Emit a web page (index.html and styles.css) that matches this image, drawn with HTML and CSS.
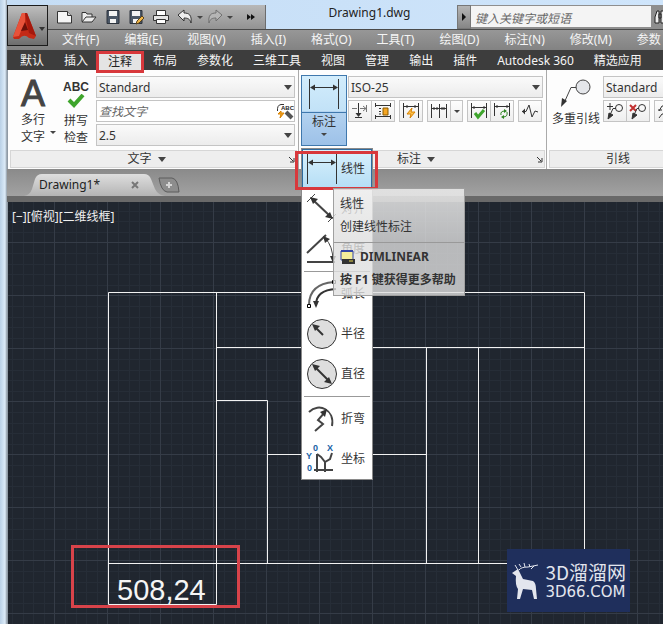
FILE: index.html
```html
<!DOCTYPE html>
<html lang="zh-CN">
<head>
    <meta charset="UTF-8">
    <meta name="viewport" content="width=device-width, initial-scale=1.0">
    <title>Drawing1.dwg</title>
    <link rel="stylesheet" href="styles.css">
</head>
<body>

    <header class="top">
        <button class="app-button" aria-label="应用程序菜单">
            <svg width="38" height="34" viewBox="0 0 38 34">
                <path d="M4 28 L13 4 L18 4 L27 27 L25 30 L20 29 Q15 24 10 30 L5 30 Z" fill="#c42a16"/>
                <path d="M4 28 L13 4 L16 4 L16 14 L12 22 L10 27 Z" fill="#e8523a"/>
                <path d="M16 4 L18 4 L27 27 L20 24 L18 15 Z" fill="#a5180c"/>
                <path d="M16 13 L19 21 L12 22 Z" fill="#6d0f08"/>
                <path d="M30 18 h6 l-3 4 z" fill="#333"/>
            </svg>
        </button>

        <div class="title-row">
            <div class="quick-access">
                <button class="quick" aria-label="新建">
                    <svg width="18" height="18" viewBox="0 0 18 18" stroke="#333"><path d="M1.500 3.500 h10 l4 4 v7.500 h-14 z" fill="#f5f5f5"/><path d="M11.500 3.500 v4 h4" fill="#ccc"/></svg>
                </button>
                <button class="quick" aria-label="打开">
                    <svg width="18" height="18" viewBox="0 0 18 18" stroke="#333" fill="#ececec"><path d="M2 13.500 V4.500 h4 l1 1.500 h5 v3"/><path d="M2 14 l4 -5 h10 l-4 5 z"/></svg>
                </button>
                <button class="quick" aria-label="保存">
                    <svg width="18" height="18" viewBox="0 0 18 18"><path d="M3 2.500 h12 v13 h-12 z" fill="#4b5766" stroke="#2c333c"/><path d="M5 3 h8 v5 h-8 z M6 11 h6 v4 h-6 z" fill="#f3f3f3"/></svg>
                </button>
                <button class="quick" aria-label="另存为">
                    <svg width="18" height="18" viewBox="0 0 18 18"><path d="M2 2.500 h12 v13 h-12 z" fill="#4b5766" stroke="#2c333c"/><path d="M4 3 h8 v5 h-8 z M5 11 h6 v4 h-6 z" fill="#f3f3f3"/><path d="M8 16 l1 -3 l5 -5 l2 2 l-5 5 z" fill="#f2b84a" stroke="#5b431a"/></svg>
                </button>
                <button class="quick" aria-label="打印">
                    <svg width="18" height="18" viewBox="0 0 18 18" stroke="#333"><path d="M4.500 7 V2.500 h9 V7" fill="#fff"/><path d="M1.500 7.500 h15 v5 h-15 z" fill="#e6e6e6"/><path d="M4.500 11.500 h9 v4 h-9 z" fill="#fff"/></svg>
                </button>
                <button class="quick" aria-label="放弃">
                    <svg width="18" height="18" viewBox="0 0 18 18"><path d="M2 7 l6 -5 v3 c5 0 8 2 7 10 c-1 -4 -3 -5 -7 -5 v3 z" fill="#eee" stroke="#333"/></svg>
                </button>
                <span class="caret small"></span>
                <button class="quick" aria-label="重做">
                    <svg width="18" height="18" viewBox="0 0 18 18"><path d="M16 7 l-6 -5 v3 c-5 0 -8 2 -7 10 c1 -4 3 -5 7 -5 v3 z" fill="#b5b5b5" stroke="#707070"/></svg>
                </button>
                <span class="caret small"></span>
                <button class="quick more" aria-label="更多">
                    <svg width="10" height="8" viewBox="0 0 10 8"><path d="M1 1 l4 3 l-4 3 z M5 1 l4 3 l-4 3 z" fill="#111"/></svg>
                </button>
            </div>
            <h1 class="title">Drawing1.dwg</h1>
            <div class="search">
                <button class="search-toggle" aria-label="收拢"><svg width="6" height="8" viewBox="0 0 6 8"><path d="M1 0 l4 4 l-4 4 z" fill="#111"/></svg></button>
                <input class="search-input" type="text" aria-label="搜索" placeholder="键入关键字或短语">
                <button class="search-go" aria-label="查找">
                    <svg width="16" height="18" viewBox="0 0 16 18"><path d="M4 9 l2 -6 h2 v12 h-4 z M10 3 h3 l2 6 v6 h-5 z M8 6 h2 v4 h-2 z" fill="#eee" stroke="#222"/></svg>
                </button>
            </div>
        </div>

        <nav class="menubar">
            <a href="#">文件(F)</a>
            <a href="#">编辑(E)</a>
            <a href="#">视图(V)</a>
            <a href="#">插入(I)</a>
            <a href="#">格式(O)</a>
            <a href="#">工具(T)</a>
            <a href="#">绘图(D)</a>
            <a href="#">标注(N)</a>
            <a href="#">修改(M)</a>
            <a href="#">参数</a>
        </nav>
    </header>

    <nav class="ribbon-tabs">
        <a href="#">默认</a>
        <a href="#">插入</a>
        <a href="#" class="active">注释</a>
        <a href="#">布局</a>
        <a href="#">参数化</a>
        <a href="#">三维工具</a>
        <a href="#">视图</a>
        <a href="#">管理</a>
        <a href="#">输出</a>
        <a href="#">插件</a>
        <a href="#">Autodesk 360</a>
        <a href="#">精选应用</a>
    </nav>

    <div class="ribbon">
        <section class="panel panel-text">
            <div class="panel-body">
                <button class="big">
                    <span class="letter">A</span>
                    <span>多行<br>文字</span>
                    <i class="caret small corner"></i>
                </button>
                <button class="big spell">
                    <span class="abc">ABC</span>
                    <svg width="20" height="14" viewBox="0 0 20 14"><path d="M3 6 l5 5 L17 1" fill="none" stroke="#3ea52c" stroke-width="4"/></svg>
                    <span>拼写<br>检查</span>
                </button>
                <div class="stack">
                    <div class="combo">
                        <select aria-label="文字样式"><option>Standard</option></select>
                    </div>
                    <div class="find">
                        <input type="text" aria-label="查找文字" placeholder="查找文字">
                        <button class="find-go" aria-label="查找">
                            <svg width="18" height="18" viewBox="0 0 18 18" fill="none"><path d="M8 2.500 H5 Q1 3 1.500 9" stroke="#333"/><text class="tiny" x="5" y="8">ABC</text><path d="M5 9 l-3 3 h3 l-1 4 l4 -5 h-3 z" fill="#f5a623" stroke="#d98200"/><path d="M10 10 l6 6" stroke="#555" stroke-width="4"/></svg>
                        </button>
                    </div>
                    <div class="combo">
                        <select aria-label="文字高度"><option>2.5</option></select>
                    </div>
                </div>
            </div>
            <div class="panel-title"><span>文字</span><i class="caret"></i><button class="launcher" aria-label="文字样式设置"><svg width="7" height="7" viewBox="0 0 7 7"><path d="M1 1 l4 4 M6 2 V6 H2" fill="none" stroke="#333"/></svg></button></div>
        </section>

        <section class="panel panel-dim">
            <div class="panel-body">
                <div class="split">
                    <button class="split-main" aria-label="线性标注">
                        <svg width="34" height="30" viewBox="0 0 34 30" stroke="#333" fill="none"><path d="M2.500 0 V30 M31.500 0 V30"/><path d="M4 8.500 H30"/><path d="M3 8.500 l5 -3 v6 z M31 8.500 l-5 -3 v6 z" fill="#333" stroke="none"/></svg>
                    </button>
                    <button class="split-drop">标注<i class="caret small"></i></button>

                    <div class="menu">
                        <button class="menu-item selected">
                            <svg width="34" height="34" viewBox="0 0 34 34" stroke="#333" fill="none"><path d="M2.500 2 V32 M31.500 2 V32 M4 10.500 H30"/><path d="M3 10.500 l5 -3 v6 z M31 10.500 l-5 -3 v6 z" fill="#333" stroke="none"/></svg>
                            线性
                        </button>
                        <button class="menu-item">
                            <svg width="34" height="34" viewBox="0 0 34 34" stroke="#444" fill="none"><path d="M2 10 L10 2 M23 30 L31 22"/><path d="M8 8 L25 24" stroke-width="2"/><path d="M5 5 l8 2 l-5 5 z M28 27 l-8 -2 l5 -5 z" fill="#333" stroke="none"/></svg>
                            对齐
                        </button>
                        <button class="menu-item">
                            <svg width="34" height="34" viewBox="0 0 34 34" stroke="#444" stroke-width="2" fill="none"><path d="M2 30 H30 M2 21 L21 3"/><path d="M20 6 Q28 14 28 29" stroke-width="1"/><path d="M18 4 l7 3 l-5 4 z M28 31 l-3 -7 h6 z" fill="#333" stroke="none"/></svg>
                            角度
                        </button>
                        <hr>
                        <button class="menu-item">
                            <svg width="34" height="34" viewBox="0 0 34 34" stroke="#666" stroke-width="2" fill="none"><path d="M4 28 Q4 7 29 5"/><path d="M11 28 Q11 13 31 12" stroke="#333"/><path d="M11 31 l-3 -7 h6 z" fill="#333" stroke="none"/><path d="M2.500 27.500 h3 v3 h-3 z M27.500 3.500 h3 v3 h-3 z" fill="#fff" stroke="#000" stroke-width="1"/></svg>
                            弧长
                        </button>
                        <button class="menu-item">
                            <svg width="34" height="34" viewBox="0 0 34 34" stroke="#333" fill="none"><circle cx="17" cy="17" r="14.500" fill="#dedede"/><path d="M18 18 L10 10" stroke-width="2"/><path d="M7 7 l8 2 l-5 5 z" fill="#333" stroke="none"/></svg>
                            半径
                        </button>
                        <button class="menu-item">
                            <svg width="34" height="34" viewBox="0 0 34 34" stroke="#333" fill="none"><circle cx="17" cy="17" r="14.500" fill="#dedede"/><path d="M9 9 L25 25" stroke-width="2"/><path d="M7 7 l8 2 l-5 5 z M27 27 l-8 -2 l5 -5 z" fill="#333" stroke="none"/></svg>
                            直径
                        </button>
                        <hr>
                        <button class="menu-item">
                            <svg width="34" height="34" viewBox="0 0 34 34" stroke="#444" stroke-width="2" fill="none"><path d="M4 10 C14 0 30 8 27 24"/><path d="M10 29 L18 22 L13 18 L20 10"/><path d="M22 7 l-2 8 l-5 -5 z" fill="#333" stroke="none"/></svg>
                            折弯
                        </button>
                        <button class="menu-item">
                            <svg width="34" height="34" viewBox="0 0 34 34" stroke="#444" stroke-width="2" fill="none"><path d="M12 12 V30 M12 12 L16 15 L20 20 L25 17 L27 11 M20 20 V30 M9 28 H28"/><g class="axis"><text x="8" y="9">0</text><text x="22" y="9">X</text><text x="1" y="17">Y</text><text x="2" y="29">0</text></g></svg>
                            坐标
                        </button>
                        <div class="mark"></div>
                    </div>

                    <div class="tooltip" role="tooltip">
                        <p>线性</p>
                        <p>创建线性标注</p>
                        <hr>
                        <p class="command"><svg width="16" height="16" viewBox="0 0 16 16"><path d="M1 2 h12 v9 h-12 z" fill="#f4ee9b" stroke="#3446a5"/><path d="M1 2 h12" stroke="#3446a5" stroke-width="2"/><path d="M2 10 h13 v5 h-13 z" fill="#333"/><path d="M9 12 h4" stroke="#e8d84c"/></svg>DIMLINEAR</p>
                        <p class="help">按 F1 键获得更多帮助</p>
                    </div>
                </div>

                <div class="stack">
                    <div class="combo">
                        <select aria-label="标注样式"><option>ISO-25</option></select>
                    </div>
                    <div class="tools">
                        <div class="group">
                            <button aria-label="打断"><svg width="18" height="18" viewBox="0 0 18 18" stroke="#333" fill="none"><path d="M1 6.500 H6 M9 6.500 H16 M15.500 3 V10 M12 4 l3 2.500 l-3 2.500" stroke="#777"/><path d="M7.500 1 V14"/><path d="M4 15.500 h7"/><path d="M7.500 15 l-3 -4 h6 z" fill="#333" stroke="none"/></svg></button>
                            <button aria-label="调整间距"><svg width="18" height="18" viewBox="0 0 18 18" stroke="#333" fill="none"><path d="M1.500 1 V5 M16.500 1 V5 M2 3.500 H16 M1.500 13 V17 M16.500 13 V17 M2 14.500 H16 M5 6.500 H7 M5 9.500 H7 M5 12 H7"/><path d="M9 6 h5 v7 h-5 z" fill="#f5a623" stroke="#8a5a00"/></svg></button>
                        </div>
                        <div class="group">
                            <button aria-label="快速标注"><svg width="18" height="18" viewBox="0 0 18 18" stroke="#333" fill="none"><path d="M1.500 1 V16 M16.500 1 V16 M2 4.500 H16 M5 3 V6 M13 3 V6"/><path d="M10 6 l-5 6 h4 l-1 4 l5 -6 h-4 z" fill="#ffc24a" stroke="#d98200"/></svg></button>
                        </div>
                        <div class="group">
                            <button aria-label="连续"><svg width="18" height="18" viewBox="0 0 18 18" stroke="#333" fill="none"><path d="M1.500 2 V16 M9.500 2 V16 M16.500 2 V16 M2 6.500 H16 M4 5 V8 M7 5 V8 M12 5 V8 M14 5 V8"/></svg></button>
                            <button class="thin" aria-label="更多标注"><i class="caret small"></i></button>
                        </div>
                        <div class="group">
                            <button aria-label="检验"><svg width="18" height="18" viewBox="0 0 18 18" stroke="#333" fill="none"><path d="M1.500 1 V16 M16.500 1 V16 M2 5.500 H16 M4 4 V7 M14 4 V7"/><path d="M5 11 l3 4 l6 -7" stroke="#3ea52c" stroke-width="3"/></svg></button>
                            <button aria-label="更新"><svg width="18" height="18" viewBox="0 0 18 18" stroke="#333" fill="none"><path d="M1.500 1 V14 M16.500 1 V14 M2 4.500 H16 M4 3 V6 M14 3 V6"/><path d="M8 13 q-1 -4 4 -4 M14 10 q1 5 -4 5" stroke="#2d8420"/><path d="M11 7 l3 2 l-3 2 z M11 13 l-3 2 l3 2 z" fill="#2d8420" stroke="none"/></svg></button>
                        </div>
                        <div class="group">
                            <button aria-label="折弯标注"><svg width="18" height="18" viewBox="0 0 18 18" stroke="#333" fill="none"><path d="M1 9.500 H5 L8 3 L11 15 L14 9 L17 10"/><path d="M1 9.500 l3 -3 v6 z" fill="#333" stroke="none"/></svg></button>
                        </div>
                    </div>
                </div>
            </div>
            <div class="panel-title"><span>标注</span><i class="caret"></i><button class="launcher" aria-label="标注样式设置"><svg width="7" height="7" viewBox="0 0 7 7"><path d="M1 1 l4 4 M6 2 V6 H2" fill="none" stroke="#333"/></svg></button></div>
        </section>

        <section class="panel panel-leader">
            <div class="panel-body">
                <button class="big leader">
                    <svg width="32" height="34" viewBox="0 0 32 34" stroke="#444" fill="none"><path d="M17 11.500 H11 L4 27"/><path d="M1 31 l1 -9 l5 3 z" fill="#333" stroke="none"/><circle cx="23" cy="11" r="7" fill="#e4e6ea"/></svg>
                    <span>多重引线</span>
                </button>
                <div class="stack">
                    <div class="combo">
                        <select aria-label="多重引线样式"><option>Standard</option></select>
                    </div>
                    <div class="tools">
                        <div class="group">
                            <button aria-label="添加引线"><svg width="18" height="18" viewBox="0 0 18 18" stroke="#333" fill="none"><path d="M1 4.500 H7 M4 1 V8 M10 6.500 H7 L4 13"/><path d="M2 17 l1 -6 l4 2 z" fill="#333"/><circle cx="13" cy="6" r="3.500"/></svg></button>
                            <button aria-label="删除引线"><svg width="18" height="18" viewBox="0 0 18 18" stroke="#333" fill="none"><path d="M1 3 l6 6 M7 3 l-6 6" stroke="#c23030" stroke-width="2"/><path d="M10 6.500 H8 L5 13"/><path d="M3 17 l1 -6 l4 2 z" fill="#333"/><circle cx="13" cy="6" r="3.500"/></svg></button>
                        </div>
                        <div class="group">
                            <button aria-label="对齐引线"><svg width="18" height="18" viewBox="0 0 18 18" stroke="#333" fill="none"><path d="M9 4 H5 L2 9 M9 12 H5 L2 16 M1 8 h4"/></svg></button>
                        </div>
                    </div>
                </div>
            </div>
            <div class="panel-title"><span>引线</span><button class="launcher" aria-label="引线样式设置"></button></div>
        </section>
    </div>

    <div class="file-tabs">
        <div class="file-tab">
            <svg class="tab-shape" width="150" height="22" viewBox="0 0 150 22">
                <defs><linearGradient id="tabFill" x1="0" y1="0" x2="0" y2="1"><stop offset="0" stop-color="#dedede"/><stop offset="1" stop-color="#b4b4b4"/></linearGradient></defs>
                <path d="M0 22 Q6 21 8 15 L11 5 Q13 0 18 0 H120 Q125 0 127 5 L131 15 Q134 21 141 22 Z" fill="url(#tabFill)"/>
            </svg>
            <a href="#">Drawing1*</a>
            <button class="tab-close" aria-label="关闭"><svg width="8" height="8" viewBox="0 0 8 8"><path d="M1 1 l6 6 M7 1 l-6 6" stroke="#777" stroke-width="2"/></svg></button>
        </div>
        <button class="tab-new" aria-label="新图形">
            <svg width="22" height="16" viewBox="0 0 22 16"><path d="M1 1 H14 Q20 2 21 15 H9 Q3 14 1 1 Z" fill="#8d8d8d" stroke="#5c5c5c"/><path d="M11 5 v6 M8 8 h6" stroke="#d5d5d5" stroke-width="2"/></svg>
        </button>
    </div>

    <main class="canvas">
        <!-- model plan: grid, walls, dimension text -->
        <svg class="drawing" viewBox="8 202 655 422" preserveAspectRatio="xMinYMin slice">
            <defs>
                <pattern id="minor" x="1" y="30" width="53" height="53" patternUnits="userSpaceOnUse">
                    <path d="M11.500 0 V53 M22.500 0 V53 M32.500 0 V53 M43.500 0 V53 M0 11.500 H53 M0 22.500 H53 M0 32.500 H53 M0 43.500 H53" stroke="#262d37"/>
                    <path d="M0.500 0 V53 M0 0.500 H53" stroke="#353c47"/>
                </pattern>
            </defs>
            <rect x="8" y="202" width="655" height="422" fill="url(#minor)"/>
            <g fill="none" stroke="#f2f2f2">
                <path d="M108.500 604.500 V292.500 H584.500 V563.500 H108.500"/>
                <path d="M216.500 292.500 V604.500 H108.500"/>
                <path d="M216.500 347.500 H584.500 M426.500 347.500 V563.500 M478.500 347.500 V563.500"/>
                <path d="M216.500 400.500 H267.500 V563.500 M267.500 454.500 H426.500"/>
            </g>
            <text class="dim-text" x="117" y="600">508,24</text>
            <rect x="72.500" y="546.500" width="166" height="60" fill="none" stroke="#d8434a" stroke-width="3"/>
        </svg>
        <p class="view-label">[−][俯视][二维线框]</p>

        <div class="watermark">
            <svg width="30" height="40" viewBox="0 0 30 40"><path d="M1 12 L7 8 L9 12 L12 18 L22 20 Q25 22 25 28 L26 38 H23 L21 29 L12 28 L9 38 H6 L7 28 Q4 24 5 15 Z" fill="#e3e6ee"/><path d="M7 9 L4 4 M8 9 Q10 6 17 6 L27 4 M10 6 L8 3 M14 6 L13 2 M19 6 L18 3 M23 5 L20 8" fill="none" stroke="#e3e6ee"/></svg>
            <div>
                <strong>3D溜溜网</strong>
                <span>3D66.COM</span>
            </div>
        </div>
    </main>

</body>
</html>
```
FILE: styles.css
```css
* {
    box-sizing: border-box;
}
body {
    display: flex;
    flex-direction: column;
    min-height: 100vh;
    margin: 0;
    padding-left: 7px;
    background: linear-gradient(to right, #b9d0e6, #dcebf8 5px, #8f9aa5 7px, #8f9aa5 8px);
    font-family: "Noto Sans", "Noto Sans CJK SC", sans-serif;
    font-size: 12px;
    line-height: 16px;
    color: #333;
}
a {
    color: inherit;
    text-decoration: none;
}
button {
    display: flex;
    align-items: center;
    justify-content: center;
    padding: 0;
    border: none;
    background: none;
    font: inherit;
    color: inherit;
}
svg {
    display: block;
    flex: none;
}
p {
    margin: 0;
}

/* triangles */
.caret {
    flex: none;
    border: 4px solid transparent;
    border-top: 5px solid #444;
    border-bottom: none;
}
.caret.small {
    border-width: 3px;
    border-top-width: 3px;
    border-bottom: none;
}

/* title bar + menu bar */
.top {
    display: grid;
    grid-template-columns: 41px minmax(0, 1fr);
    grid-template-rows: 30px 20px;
    background:
        linear-gradient(#979797, #646464) 0 30px no-repeat,
        radial-gradient(ellipse at 615px 0, #1fc96a 12px, #d8e04a 24px, transparent 36px) 0 0 / 100% 5px no-repeat,
        linear-gradient(to right, #c5ddf5, #cfe5fb);
}
.app-button {
    grid-row: 1 / 3;
    height: 41px;
    margin-top: 5px;
    border: 1px solid #1c1c1c;
    background: linear-gradient(#bdbdbd, #6e6e6e);
}
.title-row {
    display: flex;
    align-items: stretch;
    padding-top: 5px;
    border-bottom: 1px solid #4a4a4a;
}
.quick-access {
    display: flex;
    align-items: center;
    flex: none;
    width: 218px;
    padding-left: 5px;
    border-right: 1px solid #6c6c6c;
    background: linear-gradient(#b8b8b8, #939393);
}
.quick {
    width: 24px;
}
.quick.more {
    margin-left: 6px;
}
.title {
    flex: 1;
    margin: 0;
    padding-left: 16px;
    font-size: 12px;
    font-weight: normal;
    line-height: 16px;
    text-align: center;
    color: #222;
}
.search {
    display: flex;
    flex: none;
    background: #8e8e8e;
}
.search-toggle {
    width: 14px;
    border: 1px solid #777;
    background: linear-gradient(#b5b5b5, #868686);
}
.search-input {
    width: 180px;
    margin: 1px 0 2px;
    padding: 3px 4px 0;
    border: none;
    background: #f4f4f4;
    font: italic 12px "Noto Sans", "Noto Sans CJK SC", sans-serif;
}
.search-input::placeholder,
.find input::placeholder {
    color: #666;
}
.search-go {
    justify-content: flex-start;
    width: 12px;
    overflow: hidden;
}
.menubar {
    display: flex;
    gap: 25px;
    padding-left: 14px;
    overflow: hidden;
    line-height: 20px;
    white-space: nowrap;
    color: #f5f5f5;
}

/* ribbon tabs */
.ribbon-tabs {
    display: flex;
    height: 20px;
    padding-left: 3px;
    background: #3d3d3d;
    line-height: 22px;
    white-space: nowrap;
    color: #f5f5f5;
}
.ribbon-tabs a {
    padding: 0 10px;
}
.ribbon-tabs .active {
    z-index: 1;
    height: 22px;
    margin: 1px -1px 0 -2px;
    padding: 0 9px;
    border: 3px solid #d8383c;
    background: #e4e4e4;
    line-height: 16px;
    color: #222;
}

/* ribbon */
.ribbon {
    display: flex;
    height: 99px;
    margin-left: 1px;
    background: #fdfdfd;
}
.panel {
    display: flex;
    flex-direction: column;
    flex: none;
    border-right: 1px solid #aaa;
}
.panel-text {
    width: 291px;
}
.panel-dim {
    width: 248px;
}
.panel-leader {
    flex: 1;
    min-width: 0;
    overflow: hidden;
    border-right: none;
}
.panel-leader .panel-body,
.panel-leader .panel-title {
    width: 152px;
}
.panel-body {
    display: flex;
    flex: 1;
    padding: 6px 3px 0 2px;
}
.panel-title {
    display: flex;
    align-items: center;
    justify-content: center;
    gap: 6px;
    height: 18px;
    margin: 0 1px 1px 2px;
    border: 1px solid #d6d6d6;
    background: #eee;
}
.panel-title span {
    margin-left: auto;
}
.launcher {
    width: 8px;
    height: 16px;
    margin-left: auto;
}
.big {
    position: relative;
    flex-direction: column;
    justify-content: flex-start;
    width: 46px;
    line-height: 17px;
}
.letter {
    height: 35px;
    font: 36px "Liberation Sans", Arial, sans-serif;
    line-height: 36px;
    -webkit-text-stroke: 1px #444;
    color: #444;
}
.big.spell {
    width: 40px;
    padding-top: 4px;
}
.big.spell svg {
    margin-bottom: 4px;
}
.abc {
    font: bold 12px "Liberation Sans", Arial, sans-serif;
    line-height: 14px;
}
.corner {
    position: absolute;
    right: 0;
    bottom: 16px;
}
.big.leader {
    width: 54px;
    white-space: nowrap;
}
.stack {
    display: flex;
    flex-direction: column;
    flex: 1;
    gap: 2px;
    min-width: 0;
}
.combo,
.find {
    position: relative;
    display: flex;
    height: 22px;
    border: 1px solid #c4c4c4;
    background: linear-gradient(#fafafa, #ececec);
}
.find {
    background: #fff;
}
.combo::after {
    content: "";
    position: absolute;
    top: 8px;
    right: 2px;
    border: 4px solid transparent;
    border-top: 5px solid #444;
    border-bottom: none;
    pointer-events: none;
}
.combo select,
.find input {
    flex: 1;
    min-width: 0;
    padding: 0 2px;
    border: none;
    background: none;
    appearance: none;
    font: 12px "Noto Sans", "Noto Sans CJK SC", sans-serif;
    color: #333;
}
.find input {
    font-style: italic;
}
.tiny {
    fill: #222;
    font: bold 6px "Liberation Sans", sans-serif;
}
.tools {
    display: flex;
    gap: 4px;
}
.group {
    display: flex;
    border: 1px solid #c4c4c4;
    background: linear-gradient(#fdfdfd, #eee);
}
.group button {
    width: 22px;
    height: 20px;
}
.group button + button {
    width: 23px;
    border-left: 1px solid #c4c4c4;
}
.group button.thin {
    width: 12px;
}

/* dimension split button and its menu */
.split {
    position: relative;
    z-index: 2;
    flex: none;
    width: 46px;
    height: 71px;
    margin-right: 1px;
    margin-top: -1px;
    border: 1px solid #3f78ad;
    background: linear-gradient(#d3edfc, #c2e2f7 50%, #b4d3f0 51%, #9dc1e8);
}
.split-main {
    width: 100%;
    height: 37px;
    border-bottom: 1px solid #3f78ad;
}
.split-drop {
    flex-direction: column;
    gap: 3px;
    width: 100%;
    padding-top: 1px;
}
.menu {
    position: absolute;
    top: 72px;
    left: -1px;
    width: 72px;
    border: 1px solid #8a8a8a;
    background: #fff;
}
.menu hr {
    height: 1px;
    margin: 2px;
    border: none;
    background: #999;
}
.menu-item {
    justify-content: flex-start;
    gap: 2px;
    width: 100%;
    height: 40px;
    padding-left: 3px;
    white-space: nowrap;
}
.menu-item.selected {
    border: 1px solid #2e6a9e;
    padding-left: 2px;
    background: linear-gradient(#d9f1fd, #b5def5);
}
.axis text {
    fill: #1a63a5;
    stroke: none;
    font: bold 9px "Liberation Sans", sans-serif;
}
.mark {
    position: absolute;
    top: 2px;
    left: -7px;
    width: 83px;
    height: 39px;
    border: 3px solid #d8383c;
}
.tooltip {
    position: absolute;
    top: 112px;
    left: 31px;
    width: 132px;
    padding: 7px 6px;
    border: 1px solid #a0a0a0;
    background: linear-gradient(rgba(236, 236, 236, .85), rgba(222, 222, 222, .8) 50%, rgba(224, 224, 224, .8));
    white-space: nowrap;
}
.tooltip p + p {
    margin-top: 7px;
}
.tooltip hr {
    height: 1px;
    margin: 7px -6px 6px;
    border: none;
    background: #999;
}
.tooltip .command,
.tooltip .help {
    font-weight: bold;
}
.tooltip .command {
    display: flex;
    gap: 4px;
}

/* file tabs */
.file-tabs {
    display: flex;
    height: 33px;
    padding: 5px 0 0 17px;
    border-bottom: 6px solid #696969;
    background: linear-gradient(#8a8a8a, #a2a2a2);
}
.file-tab {
    position: relative;
    display: flex;
    align-items: center;
    width: 134px;
    height: 22px;
    padding: 0 19px 0 15px;
    color: #222;
}
.tab-shape {
    position: absolute;
    top: 0;
    left: 0;
}
.file-tab a,
.tab-close {
    position: relative;
}
.tab-close {
    margin-left: auto;
}
.tab-new {
    height: 22px;
}

/* drawing area */
.canvas {
    position: relative;
    flex: 1;
    margin-left: 1px;
    background: #20262f;
}
.drawing {
    width: 100%;
}
.dim-text {
    fill: #f5f5f5;
    font: 29px "Liberation Sans", Arial, sans-serif;
}
.view-label {
    position: absolute;
    top: 7px;
    left: 4px;
    color: #f0f0f0;
}
.watermark {
    position: absolute;
    right: 33px;
    bottom: 12px;
    display: flex;
    align-items: center;
    gap: 4px;
    height: 63px;
    padding: 0 4px;
    background: #1f2f5c;
    color: #e3e6ee;
}
.watermark strong,
.watermark span {
    display: block;
}
.watermark strong {
    font: 19px "Noto Sans CJK SC", sans-serif;
    line-height: 22px;
}
.watermark span {
    font: 15px "DejaVu Sans", sans-serif;
    line-height: 18px;
}
```
